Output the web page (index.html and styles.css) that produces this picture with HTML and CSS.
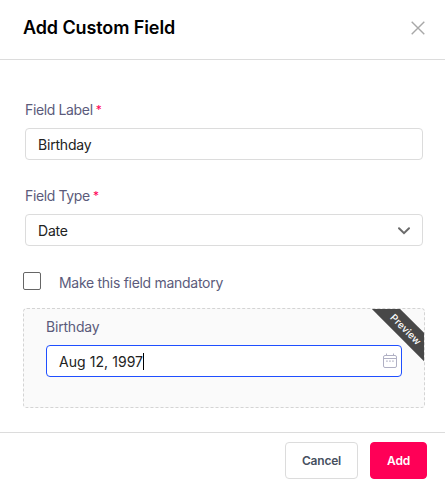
FILE: index.html
```
<!DOCTYPE html>
<html lang="en">
<head>
    <meta charset="utf-8">
    <title>Add Custom Field</title>
    <link rel="stylesheet" href="styles.css">
</head>
<body>
    <div class="modal">
        <div class="modal-header">
            <h1>Add Custom Field</h1>
            <button class="close" aria-label="Close">
                <svg width="14" height="14" viewBox="0 0 14 14">
                    <path d="M0.7 0.7 L13.3 13.3 M13.3 0.7 L0.7 13.3"/>
                </svg>
            </button>
        </div>

        <div class="modal-body">
            <div class="field">
                <div class="label">Field Label<span class="required">*</span></div>
                <div class="input">Birthday</div>
            </div>
            <div class="field">
                <div class="label">Field Type<span class="required">*</span></div>
                <div class="input select">
                    <span>Date</span>
                    <svg width="12" height="8" viewBox="0 0 12 8">
                        <path d="M1 1.2 L6 6.2 L11 1.2"/>
                    </svg>
                </div>
            </div>
            <div class="mandatory">
                <span class="checkbox"></span>
                <span class="mandatory-text">Make this field mandatory</span>
            </div>

            <div class="preview">
                <div class="label preview-label">Birthday</div>
                <div class="input date">
                    <span class="date-text">Aug 12, 1997</span><span class="caret"></span>
                    <svg width="16" height="16" viewBox="0 0 16 16">
                        <rect x="1.5" y="2.5" width="13" height="12" rx="1.5"/>
                        <path d="M1.5 5.5 H14.5 M4.5 0.5 V3 M11.5 0.5 V3"/>
                        <path class="dots" d="M4.2 8.2 H5.7 M7.2 8.2 H8.7 M10.2 8.2 H11.7"/>
                    </svg>
                </div>
                <div class="ribbon">Preview</div>
            </div>
        </div>

        <div class="modal-footer">
            <button class="btn cancel">Cancel</button>
            <button class="btn add">Add</button>
        </div>
    </div>
</body>
</html>
```

FILE: styles.css
```
* {
    box-sizing: border-box;
}

body {
    margin: 0;
    background: #fff;
    font-family: Inter, "Liberation Sans", sans-serif;
    font-size: 14px;
    color: #222;
}

.modal {
    height: 487px;
    display: flex;
    flex-direction: column;
    overflow: hidden;
}

.modal-header {
    height: 60px;
    padding: 0 20px 4px 23px;
    border-bottom: 1px solid #dcdcdc;
    display: flex;
    align-items: center;
    justify-content: space-between;
}

h1 {
    margin: 0;
    font-size: 18px;
    line-height: 24px;
    font-weight: 600;
    letter-spacing: -0.1px;
    color: #000;
}

.close {
    display: flex;
    padding: 0;
    border: 0;
    background: none;
}

.close svg {
    fill: none;
    stroke: #a8a8a8;
    stroke-width: 1.4;
}

.modal-body {
    height: 372px;
    padding: 40px 20px 0 23px;
}

.field {
    height: 86px;
    padding: 0 2px;
}

.label {
    height: 20px;
    line-height: 20px;
    letter-spacing: -0.36px;
    color: #5b5b7b;
}

.preview-label {
    letter-spacing: -0.2px;
}

.required {
    margin-left: 3px;
    font-size: 12px;
    line-height: 1;
    vertical-align: 1px;
    color: #ff0057;
}

.input {
    height: 32px;
    margin-top: 8px;
    padding: 1px 12px 0;
    border: 1px solid #dcdcdc;
    border-radius: 4px;
    background: #fff;
    letter-spacing: -0.2px;
    display: flex;
    align-items: center;
}

.select {
    justify-content: space-between;
}

.select svg {
    fill: none;
    stroke: #6b6b6b;
    stroke-width: 2;
    stroke-linecap: round;
}

.mandatory {
    height: 36px;
    display: flex;
    color: #5b5b7b;
}

.checkbox {
    width: 18px;
    height: 18px;
    margin-right: 18px;
    border: 1px solid #666;
    border-radius: 2px;
}

.mandatory-text {
    line-height: 22px;
    letter-spacing: -0.29px;
}

.preview {
    position: relative;
    width: 402px;
    height: 100px;
    padding: 8px 22px 0;
    border: 1px dashed #d4d4d4;
    border-radius: 4px;
    background: #fafafa;
    overflow: hidden;
}

.date {
    border-color: #1f4fff;
    padding-right: 3px;
    letter-spacing: 0.06px;
}

.caret {
    width: 1px;
    height: 17px;
    background: #000;
}

.date svg {
    margin-top: -1px;
    margin-left: auto;
    fill: none;
    stroke: #b0b0c4;
}

.date .dots {
    stroke-width: 1.3;
}

.ribbon {
    position: absolute;
    top: 9px;
    right: -31px;
    width: 100px;
    height: 20px;
    padding-left: 3px;
    background: #484848;
    color: #fff;
    font-size: 10px;
    font-weight: 500;
    line-height: 20px;
    letter-spacing: 0.1px;
    text-align: center;
    transform: rotate(45deg);
}

.modal-footer {
    height: 55px;
    padding: 9px 18px 0;
    border-top: 1px solid #dcdcdc;
    display: flex;
    justify-content: flex-end;
    gap: 12px;
}

.btn {
    height: 37px;
    padding: 0;
    border: 1px solid #dcdcdc;
    border-radius: 4px;
    font: 600 12px Inter, "Liberation Sans", sans-serif;
    letter-spacing: -0.2px;
}

.cancel {
    width: 73px;
    background: #fff;
    color: #475060;
}

.add {
    width: 57px;
    border-color: #ff0057;
    background: #ff0057;
    color: #fff;
}
```
